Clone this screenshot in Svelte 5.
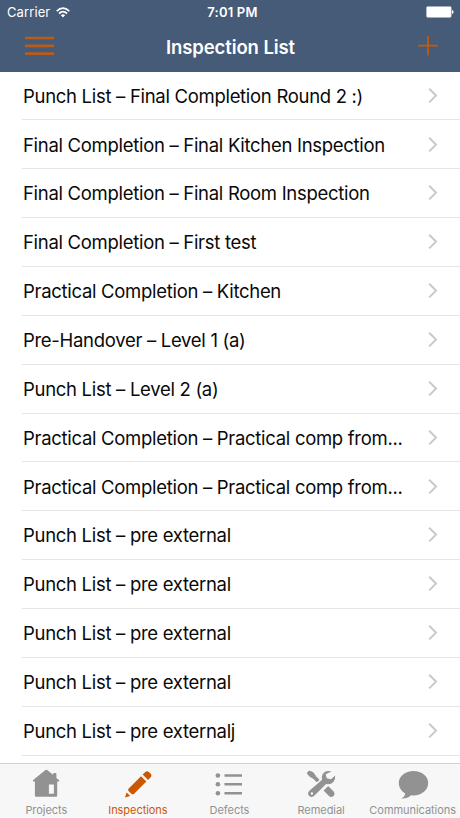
<script lang="ts">
  const inspections = [
    "Punch List – Final Completion Round 2 :)",
    "Final Completion – Final Kitchen Inspection",
    "Final Completion – Final Room Inspection",
    "Final Completion – First test",
    "Practical Completion – Kitchen",
    "Pre-Handover – Level 1 (a)",
    "Punch List – Level 2 (a)",
    "Practical Completion – Practical comp from...",
    "Practical Completion – Practical comp from...",
    "Punch List – pre external",
    "Punch List – pre external",
    "Punch List – pre external",
    "Punch List – pre external",
    "Punch List – pre externalj"
  ];

  const tabs = ["Projects", "Inspections", "Defects", "Remedial", "Communications"];
  let active = $state("Inspections");
</script>

<div class="screen">
  <header>
    <div class="status-bar">
      <div class="carrier">
        <span>Carrier</span>
        <svg width="14" height="11" viewBox="0 0 14 11" fill="none" stroke="#fff" stroke-width="1.7">
          <path d="M.7 4.1Q7-1.7 13.3 4.1" />
          <path d="M3 6.5Q7 2.9 11 6.5" />
          <path d="M4.9 8.2Q7 6.5 9.1 8.2L7 10.6Z" fill="#fff" stroke="none" />
        </svg>
      </div>
      <strong>7:01 PM</strong>
      <svg class="battery" width="28" height="12" viewBox="0 0 28 12" fill="#fff">
        <rect x=".4" y=".4" width="25" height="11" rx="1.3" />
        <path d="M26 4q1.6.5 1.6 2T26 8Z" />
      </svg>
    </div>
    <div class="nav-bar">
      <button class="menu" aria-label="Menu">
        <svg width="30" height="20" viewBox="0 0 30 20" stroke="#b85b1b" stroke-width="2.7">
          <path d="M0 2h29.2M0 9.9h29.2M0 17.6h29.2" />
        </svg>
      </button>
      <h1>Inspection List</h1>
      <button class="add" aria-label="Add inspection">
        <svg width="20" height="20" viewBox="0 0 20 20" stroke="#c4590b" stroke-width="1.8">
          <path d="M0 9.7h20M10 0v19.5" />
        </svg>
      </button>
    </div>
  </header>

  <main>
    {#each inspections as inspection}
      <div class="row">
        <span>{inspection}</span>
        <svg width="10" height="16" viewBox="0 0 10 16" fill="none" stroke="#c7c7cc" stroke-width="2">
          <path d="M1.2.8 8 7.6l-6.8 6.8" />
        </svg>
      </div>
    {/each}
  </main>

  <nav>
    {#each tabs as tab}
      <button class="tab" class:active={active === tab} onclick={() => (active = tab)}>
        <svg width="32" height="32" viewBox="0 0 32 32" fill="currentColor">
          {#if tab === "Projects"}
            <path
              fill-rule="evenodd"
              d="M15.5 3.1q.8-.7 1.6 0l6 4.7V7q0-1 1-1h1.3q1 0 1 1v4l2.5 2q.8.9 0 1.6H27.2v14q0 1.2-1.2 1.2H6q-1.1 0-1.1-1.2v-14H3.2q-.9-.8 0-1.6ZM18.9 17.5v9.2h5v-9.2Z"
            />
          {:else if tab === "Inspections"}
            <g transform="translate(3 30.6) rotate(-45)">
              <path d="m0 0 4.8-2.5v5ZM8.4-3.8h18v7.6h-18L7.2 2.6V-2.6ZM28.8-3.8h3.4q2.8 0 2.8 2.8v2q0 2.8-2.8 2.8h-3.4Z" />
            </g>
          {:else if tab === "Defects"}
            <circle cx="4.9" cy="8.5" r="2.3" />
            <circle cx="4.9" cy="17.3" r="2.3" />
            <circle cx="4.9" cy="26.2" r="2.3" />
            <path d="M11.5 7.3h17.5v2.4h-17.5zM11.5 16.1h17.5v2.4h-17.5zM11.5 25h17.5v2.4h-17.5z" />
          {:else if tab === "Remedial"}
            <path d="M2.1 6.1 4.2 4.1 8.1 5.6 10.3 9 14 12.7 11.8 14.9 8 11.1 4.6 9.2Z" stroke="currentColor" stroke-linejoin="round" />
            <path d="m18.6 23.6 4.6-4.6 5.7 5.8q1.5 2.2-.4 4.2-2.1 1.8-4.3.3Z" />
            <path
              fill-rule="evenodd"
              d="M26.5 4.5q-6.1-1.8-9 2.9-1.3 2.6-.4 5.3L4.4 23.8q-2.5 2.7-.2 5.1 2.7 2.3 5.3-.3l11.6-11.6q4.5.9 7.3-2.1 2.4-2.8 1.7-6.3L26 12.3l-4.3-1-1-4.1ZM6.9 25.3a1.2 1.2 0 1 0 0 2.4 1.2 1.2 0 0 0 0-2.4Z"
            />
          {:else}
            <path d="M16.5 4C8.3 4 1.8 9.2 1.8 16c0 4.4 2.5 8.1 6.4 10.4-.4 2.5-2 4.2-4.2 5.1 4 .5 7.4-.8 10-3.2l2.5.1c8.3 0 14.7-5.4 14.7-12.4S24.8 4 16.5 4Z" />
          {/if}
        </svg>
        <span>{tab}</span>
      </button>
    {/each}
  </nav>
</div>

<style>
  :global(body) {
    background: #fff;
  }

  .screen {
    display: flex;
    flex-direction: column;
    width: 460px;
    height: 818px;
    overflow: hidden;
    background: #fff;
    color: #090909;
    font-family: Inter, "Liberation Sans", sans-serif;
  }

  button {
    margin: 0;
    padding: 0;
    border: 0;
    background: none;
    font: inherit;
  }

  svg {
    display: block;
    flex-shrink: 0;
  }

  header {
    flex: 0 0 71.5px;
    background: #465b77;
    color: #fff;
  }

  .status-bar,
  .nav-bar {
    display: grid;
    grid-template-columns: 1fr auto 1fr;
    align-items: center;
  }

  .status-bar {
    height: 24px;
    padding: 0 6px 0 7px;
    font-size: 13px;
  }

  .carrier {
    display: flex;
    align-items: center;
    gap: 6px;
    letter-spacing: 0.1px;
  }

  .status-bar strong {
    margin-left: 4px;
    font-weight: 600;
    letter-spacing: 0.2px;
  }

  .battery,
  .add {
    justify-self: end;
  }

  .nav-bar {
    height: 44px;
    padding: 0 22px 0 25px;
  }

  .menu {
    justify-self: start;
  }

  h1 {
    margin: 2px 2px 0 0;
    font-size: 18.5px;
    font-weight: 600;
    letter-spacing: -0.1px;
  }

  main {
    flex: 1;
    overflow: hidden;
  }

  .row {
    display: flex;
    box-sizing: border-box;
    align-items: center;
    justify-content: space-between;
    height: 48.86px;
    margin-left: 22px;
    padding: 0.6px 22px 0 1px;
    border-bottom: 1px solid #e5e5e7;
    font-size: 18.5px;
    letter-spacing: -0.3px;
    white-space: nowrap;
  }

  nav {
    display: flex;
    flex: 0 0 55px;
    box-sizing: border-box;
    padding-left: 0.5px;
    border-top: 1px solid #d2d2d2;
    background: #f7f7f7;
  }

  .tab {
    display: flex;
    flex: 0 0 91.6px;
    flex-direction: column;
    align-items: center;
    color: #929292;
    font-size: 11px;
    line-height: 14px;
  }

  .tab svg {
    margin: 3px 0 4px;
  }

  .tab span {
    letter-spacing: -0.05px;
  }

  .tab.active {
    color: #cc5702;
  }
</style>
